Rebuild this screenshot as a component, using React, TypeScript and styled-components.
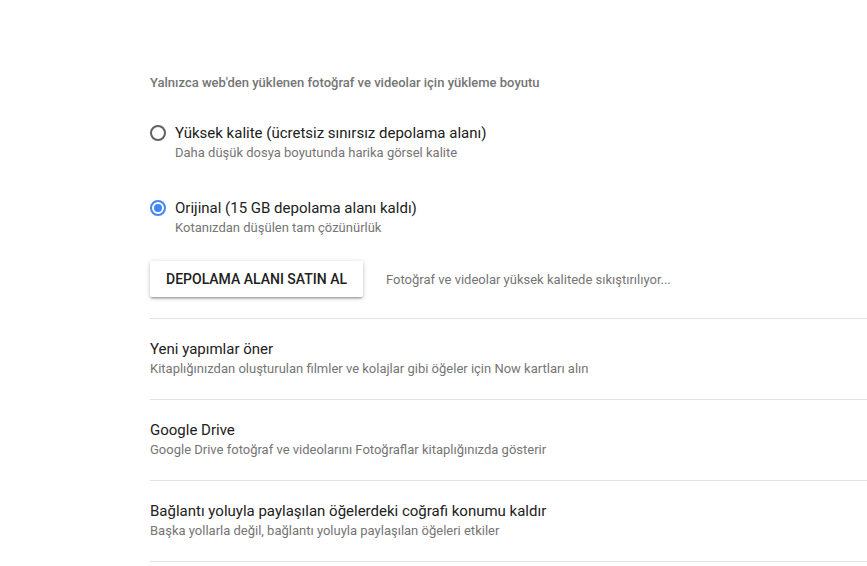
import React from "react";
import styled, { createGlobalStyle } from "styled-components";

const Global = createGlobalStyle`
  html, body { margin: 0; padding: 0; background: #ffffff; }
  body { font-family: Roboto, "Noto Sans", Arial, sans-serif; -webkit-font-smoothing: antialiased; }
`;

const Page = styled.div`
  padding: 74px 0 0 150px;
`;

const SectionLabel = styled.div`
  font-size: 13px;
  font-weight: 500;
  line-height: 18px;
  color: #757575;
`;

const Options = styled.div`
  display: flex;
  flex-direction: column;
  gap: 36px;
  margin-top: 31px;
`;

const Option = styled.label`
  display: flex;
  align-items: flex-start;
  gap: 9px;
  cursor: pointer;
`;

const RadioCircle = styled.span<{ $checked?: boolean }>`
  box-sizing: border-box;
  width: 16px;
  height: 16px;
  margin-top: 2px;
  border-radius: 50%;
  border: 2px solid ${(p) => (p.$checked ? "#4285f4" : "#616161")};
  display: flex;
  align-items: center;
  justify-content: center;
  flex: none;
  &::after {
    content: "";
    width: 8px;
    height: 8px;
    border-radius: 50%;
    background: ${(p) => (p.$checked ? "#4285f4" : "transparent")};
  }
`;

const TextBlock = styled.div`
  display: flex;
  flex-direction: column;
`;

const Title = styled.div`
  font-size: 15px;
  line-height: 20px;
  color: #212121;
`;

const Sub = styled.div`
  font-size: 13px;
  line-height: 19px;
  color: #757575;
`;

const ActionRow = styled.div`
  display: flex;
  align-items: center;
  gap: 23px;
  margin-top: 24px;
  padding-bottom: 21px;
  border-bottom: 1px solid #e0e0e0;
`;

const RaisedButton = styled.button`
  height: 36px;
  padding: 0 16px;
  border: none;
  border-radius: 2px;
  background: #ffffff;
  box-shadow: 0 2px 2px 0 rgba(0, 0, 0, 0.14), 0 3px 1px -2px rgba(0, 0, 0, 0.12), 0 1px 5px 0 rgba(0, 0, 0, 0.2);
  font-family: Roboto, Arial, sans-serif;
  font-size: 14px;
  font-weight: 500;
  color: #212121;
  cursor: pointer;
`;

const Status = styled.div`
  font-size: 13px;
  color: #757575;
`;

const SettingRow = styled.div`
  padding: 20px 0 21px;
  border-bottom: 1px solid #e0e0e0;
`;

const rows = [
  {
    title: "Yeni yapımlar öner",
    sub: "Kitaplığınızdan oluşturulan filmler ve kolajlar gibi öğeler için Now kartları alın",
  },
  {
    title: "Google Drive",
    sub: "Google Drive fotoğraf ve videolarını Fotoğraflar kitaplığınızda gösterir",
  },
  {
    title: "Bağlantı yoluyla paylaşılan öğelerdeki coğrafi konumu kaldır",
    sub: "Başka yollarla değil, bağlantı yoluyla paylaşılan öğeleri etkiler",
  },
];

export default function App() {
  return (
    <>
      <Global />
      <Page>
        <SectionLabel>Yalnızca web'den yüklenen fotoğraf ve videolar için yükleme boyutu</SectionLabel>
        <Options>
          <Option>
            <RadioCircle />
            <TextBlock>
              <Title>Yüksek kalite (ücretsiz sınırsız depolama alanı)</Title>
              <Sub>Daha düşük dosya boyutunda harika görsel kalite</Sub>
            </TextBlock>
          </Option>
          <Option>
            <RadioCircle $checked />
            <TextBlock>
              <Title>Orijinal (15 GB depolama alanı kaldı)</Title>
              <Sub>Kotanızdan düşülen tam çözünürlük</Sub>
            </TextBlock>
          </Option>
        </Options>
        <ActionRow>
          <RaisedButton>DEPOLAMA ALANI SATIN AL</RaisedButton>
          <Status>Fotoğraf ve videolar yüksek kalitede sıkıştırılıyor...</Status>
        </ActionRow>
        {rows.map((r) => (
          <SettingRow key={r.title}>
            <Title>{r.title}</Title>
            <Sub>{r.sub}</Sub>
          </SettingRow>
        ))}
      </Page>
    </>
  );
}
